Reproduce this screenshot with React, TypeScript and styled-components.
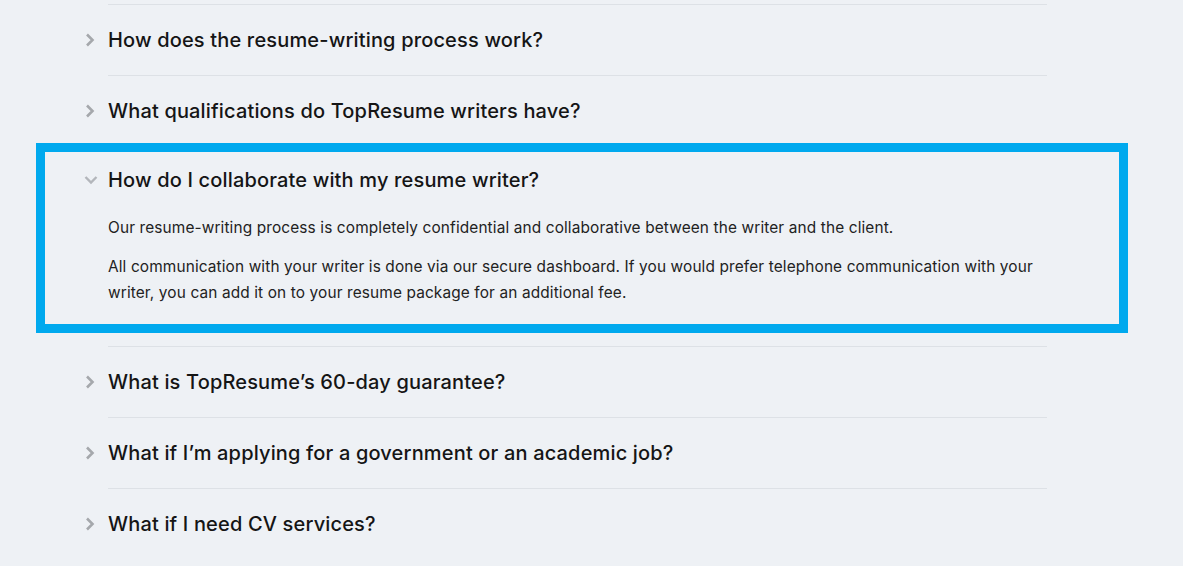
import React, { useState } from 'react';
import styled, { createGlobalStyle, css } from 'styled-components';

const GlobalStyle = createGlobalStyle`
  html, body {
    margin: 0;
    padding: 0;
    background: #eef1f5;
  }
  body {
    font-family: 'Inter', 'Noto Sans', Arial, sans-serif;
    -webkit-font-smoothing: antialiased;
  }
`;

type Faq = {
  question: string;
  answer?: string[];
};

const faqs: Faq[] = [
  { question: 'How does the resume-writing process work?' },
  { question: 'What qualifications do TopResume writers have?' },
  {
    question: 'How do I collaborate with my resume writer?',
    answer: [
      'Our resume-writing process is completely confidential and collaborative between the writer and the client.',
      'All communication with your writer is done via our secure dashboard. If you would prefer telephone communication with your writer, you can add it on to your resume package for an additional fee.',
    ],
  },
  { question: 'What is TopResume\u2019s 60-day guarantee?' },
  { question: 'What if I\u2019m applying for a government or an academic job?' },
  { question: 'What if I need CV services?' },
];

const Page = styled.main`
  padding: 4px 0 0 84px;
  min-height: 100vh;
  box-sizing: border-box;
`;

const List = styled.ul`
  list-style: none;
  margin: 0;
  padding: 0;
  width: 963px;
`;

const Item = styled.li<{ $highlighted: boolean }>`
  position: relative;
  display: flex;

  ${(p) =>
    p.$highlighted &&
    css`
      &::after {
        content: '';
        position: absolute;
        top: -3px;
        left: -48px;
        right: -81px;
        bottom: 13px;
        border: 9px solid #00a9ee;
        pointer-events: none;
      }
    `}
`;

const Gutter = styled.div<{ $open: boolean }>`
  width: 24px;
  flex: none;
  padding-top: ${(p) => (p.$open ? 20 : 22)}px;
  height: 28px;
  display: flex;
  align-items: center;
`;

const Main = styled.div<{ $open: boolean }>`
  flex: 1;
  border-top: 1px solid #dde1e6;
  padding: ${(p) => (p.$open ? '19px 0 40px' : '21px 0')};
`;

const Question = styled.button`
  all: unset;
  display: block;
  cursor: pointer;
  font-family: 'Inter', 'Noto Sans', Arial, sans-serif;
  font-size: 20px;
  line-height: 28px;
  font-weight: 500;
  color: #151515;
  letter-spacing: 0.16px;
`;

const Answer = styled.div`
  padding-top: 21px;
  display: flex;
  flex-direction: column;
  gap: 13px;
  padding-right: 8px;
`;

const Para = styled.p`
  margin: 0;
  font-size: 15.4px;
  line-height: 26px;
  letter-spacing: 0.13px;
  color: #222;
`;

const Chevron = ({ open }: { open: boolean }) =>
  open ? (
    <svg width="14" height="10" viewBox="0 0 14 10" aria-hidden>
      <path d="M1.5 2 L7 7.5 L12.5 2" fill="none" stroke="#b3b6bb" strokeWidth="2.4" />
    </svg>
  ) : (
    <svg width="12" height="14" viewBox="0 0 12 14" aria-hidden>
      <path d="M3 1.5 L8.5 7 L3 12.5" fill="none" stroke="#a5a8ac" strokeWidth="2.6" />
    </svg>
  );

export default function App() {
  const [openIndex, setOpenIndex] = useState<number>(2);

  return (
    <>
      <GlobalStyle />
      <Page>
        <List>
          {faqs.map((faq, i) => {
            const open = i === openIndex && !!faq.answer;
            return (
              <Item key={faq.question} $highlighted={i === 2}>
                <Gutter $open={open}>
                  <Chevron open={open} />
                </Gutter>
                <Main $open={open}>
                  <Question onClick={() => setOpenIndex(open ? -1 : i)}>{faq.question}</Question>
                  {open && (
                    <Answer>
                      {faq.answer!.map((p) => (
                        <Para key={p}>{p}</Para>
                      ))}
                    </Answer>
                  )}
                </Main>
              </Item>
            );
          })}
        </List>
      </Page>
    </>
  );
}
